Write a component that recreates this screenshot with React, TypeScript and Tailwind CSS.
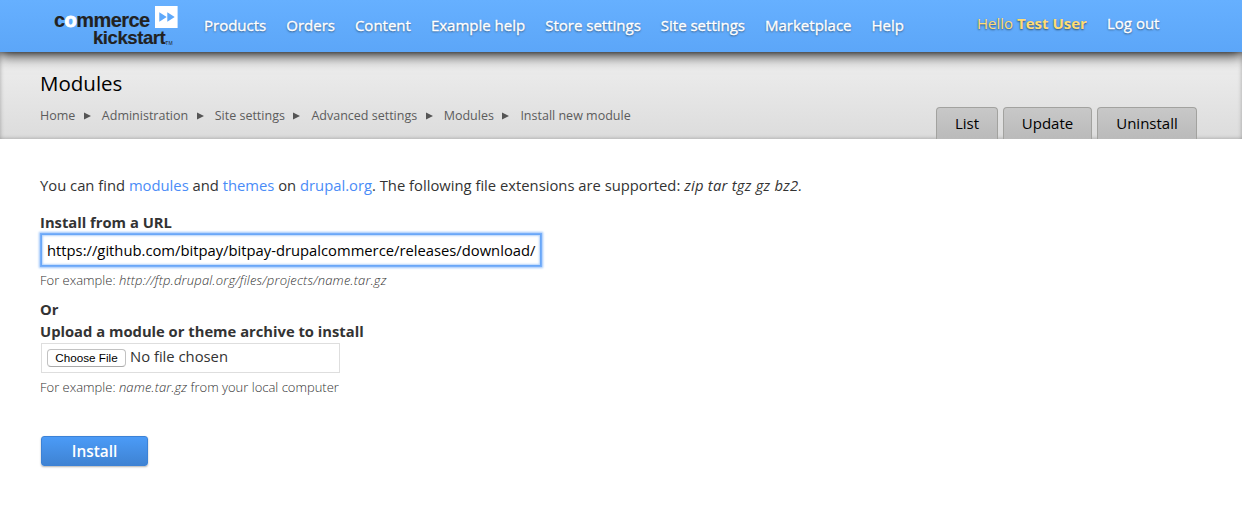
import React from "react";

const nav = ["Products", "Orders", "Content", "Example help", "Store settings", "Site settings", "Marketplace", "Help"];
const crumbs = ["Home", "Administration", "Site settings", "Advanced settings", "Modules", "Install new module"];

function Logo() {
  return (
    <div className="relative h-[46px] w-[138px] font-['Liberation_Sans',sans-serif] font-bold text-[#222] [-webkit-text-stroke:0.15px_currentColor]">
      <div className="absolute left-[14px] top-[12px] h-[17px] text-[20px] leading-[17px] tracking-[-0.55px]">
        c<span className="text-white [-webkit-text-stroke:0.9px_#fff]">o</span>mmerce
      </div>
      <div className="absolute left-[53px] top-[30px] flex h-[16px] text-[18.5px] leading-[16px] tracking-[-0.42px]">
        kickstart<span className="mt-[5px] text-[5px] font-normal tracking-normal [-webkit-text-stroke:0]">TM</span>
      </div>
      <svg className="absolute left-[115px] top-[6px]" width="23" height="22" viewBox="0 0 23 22">
        <rect width="22.6" height="22" fill="#fff" />
        <path d="M4.3 6.2l7.4 4.8-7.4 4.8zM12.3 6.2l7.4 4.8-7.4 4.8z" fill="#5ea9fb" />
      </svg>
    </div>
  );
}

function Tab({ children, className }: { children: string; className: string }) {
  return (
    <a className={`flex h-8 items-center justify-center rounded-t-[4px] border border-b-0 border-[#a2a29f] bg-linear-to-b from-[#c8c8c8] to-[#bababa] pb-px text-[15px] text-black ${className}`}>
      {children}
    </a>
  );
}

export default function App() {
  return (
    <div className="h-[505px] w-[1242px] overflow-hidden bg-white font-['Open_Sans',sans-serif] text-[#333]">
      <header className="relative flex h-[52px] bg-linear-to-b from-[#66b0ff] to-[#5ca6f8] text-[15px] text-white shadow-[0_0_14px_2px_#000] [text-shadow:0_1px_2px_rgba(0,0,0,0.55)]">
        <div className="ml-10 w-[164px] [text-shadow:none]"><Logo /></div>
        <nav className="flex flex-1 gap-5 pt-[14px] [-webkit-text-stroke:0.35px_currentColor]">
          {nav.map((n) => <a key={n}>{n}</a>)}
        </nav>
        <div className="flex w-[265px] gap-[20px] pt-[12px]">
          <span className="w-[110px] whitespace-nowrap text-[#ffdc74]">Hello <b>Test User</b></span>
          <a className="[-webkit-text-stroke:0.3px_currentColor]">Log out</a>
        </div>
      </header>
      <section className="flex h-[87px] justify-between bg-linear-to-b from-[#efefef] to-[#dcdcdc] pr-[45px] pl-10 shadow-[inset_0_0_4px_rgba(0,0,0,0.3)]">
        <div className="pt-[19px]">
          <h1 className="text-[20.5px] leading-6 text-black">Modules</h1>
          <ol className="mt-[9px] flex text-[12.5px] leading-6 text-[#5c5c5c]">
            {crumbs.map((c, i) => (
              <li key={c} className="flex items-center">
                {c}
                {i < crumbs.length - 1 && (
                  <svg className="mr-[11px] ml-[8.5px]" width="7" height="8" viewBox="0 0 7 8"><path d="M0 .5l7 3.5-7 3.5z" fill="#555" /></svg>
                )}
              </li>
            ))}
          </ol>
        </div>
        <div className="flex items-end gap-[5px]">
          <Tab className="w-[62px]">List</Tab>
          <Tab className="w-[89px]">Update</Tab>
          <Tab className="w-[100px]">Uninstall</Tab>
        </div>
      </section>
      <main className="flex flex-col items-start pt-[35px] pl-10 text-[14.8px] leading-[22px]">
        <p className="text-[14.79px]">
          You can find <a className="text-[#4a8cf7]">modules</a> and <a className="text-[#4a8cf7]">themes</a> on <a className="text-[#4a8cf7]">drupal.org</a>. The following file extensions are supported: <i className="tracking-[0.25px]">zip tar tgz gz bz2.</i>
        </p>
        <label className="mt-[15px] text-[14.75px] font-bold">Install from a URL</label>
        <div className="mt-px ml-px flex h-[32px] w-[500px] items-center overflow-hidden border border-[#69a7f7] bg-white pl-[5px] text-[14.77px] whitespace-nowrap text-black shadow-[0_0_0_1px_#78affa,0_0_2px_2px_#9cc5fb,inset_0_0_2px_1px_#b5d3fb]">
          https://github.com/bitpay/bitpay-drupalcommerce/releases/download/
        </div>
        <p className="mt-[3px] text-[13px] font-light text-[#333]">For example: <i className="tracking-[0.22px]">http://ftp.drupal.org/files/projects/name.tar.gz</i></p>
        <div className="mt-[7px] text-[14.75px] font-bold">Or</div>
        <label className="text-[14.75px] font-bold">Upload a module or theme archive to install</label>
        <div className="mt-px ml-px flex h-[30px] w-[299px] items-center border border-[#dedede] pl-[5px]">
          <button className="flex h-[18px] w-[79px] items-center justify-center rounded-[4px] border border-[#c2c2c2] border-b-[#aaa] bg-white font-['Liberation_Sans',sans-serif] text-[11.7px] text-black">Choose File</button>
          <span className="ml-[4px] -mt-[4px]">No file chosen</span>
        </div>
        <p className="mt-[3px] text-[13px] font-light text-[#333]">For example: <i className="tracking-[0.15px]">name.tar.gz</i> from your local computer</p>
        <button className="mt-[38px] ml-px flex h-[30px] w-[107px] items-center justify-center rounded-[3px] border border-[#3c82d6] bg-linear-to-b from-[#4b9bf7] to-[#3f83d3] pt-px text-[15.4px] font-semibold text-white shadow-[0_1px_2px_rgba(0,0,0,0.3)]">Install</button>
      </main>
    </div>
  );
}
